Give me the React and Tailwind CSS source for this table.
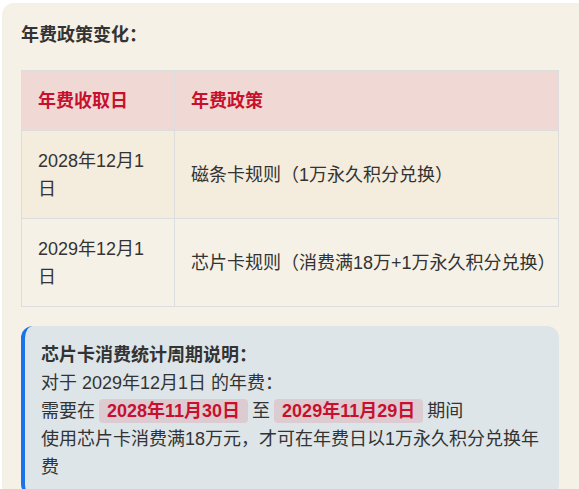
import React from "react";

const rows = [
  { date: "2028年12月1日", rule: "磁条卡规则（1万永久积分兑换）", bg: "bg-[#f4ecdc]" },
  { date: "2029年12月1日", rule: "芯片卡规则（消费满18万+1万永久积分兑换）", bg: "bg-[#f5f1e6]" },
];

const Mark = ({ children }) => (
  <span className="mx-[4px] rounded-[4px] bg-[#dccbd1] px-[8px] py-[2px] font-bold text-[#c8102e]">
    {children}
  </span>
);

const App = () => {
  return (
    <div
      className="h-[489px] w-[579px] overflow-hidden bg-white pl-[2px] pt-[3px] text-[18px] leading-[28px] text-[#333]"
      style={{ fontFamily: '"Liberation Sans", "Noto Sans CJK SC", sans-serif' }}
    >
      <div className="w-[596px] rounded-[12px] bg-[#f5f1e6] px-[19px] pb-[19px] pt-[18px]">
        <h3 className="mb-[21px] font-bold text-[#333]">年费政策变化：</h3>

        <table className="w-[538px] table-fixed border-collapse">
          <thead>
            <tr className="bg-[#f0d9d4]">
              <th className="w-[153px] border border-[#dddddd] px-[16px] py-[15.5px] text-left font-bold text-[#c8102e]">
                年费收取日
              </th>
              <th className="border border-[#dddddd] px-[16px] py-[15.5px] text-left font-bold text-[#c8102e]">
                年费政策
              </th>
            </tr>
          </thead>
          <tbody>
            {rows.map((row) => (
              <tr key={row.date} className={row.bg}>
                <td className="border border-[#dddddd] px-[16px] py-[15.5px]">{row.date}</td>
                <td className="whitespace-nowrap border border-[#dddddd] px-[16px] py-[15.5px]">{row.rule}</td>
              </tr>
            ))}
          </tbody>
        </table>

        <div className="mt-[19px] w-[538px] rounded-[12px] border-l-[4px] border-[#1a73e8] bg-[#dde5e8] py-[15px] pl-[16px] pr-[6px]">
          <div className="font-bold">芯片卡消费统计周期说明：</div>
          <div>对于 2029年12月1日 的年费：</div>
          <div>
            需要在<Mark>2028年11月30日</Mark>至<Mark>2029年11月29日</Mark>期间
          </div>
          <div>使用芯片卡消费满18万元，才可在年费日以1万永久积分兑换年费</div>
        </div>
      </div>
    </div>
  );
};

export default App;
